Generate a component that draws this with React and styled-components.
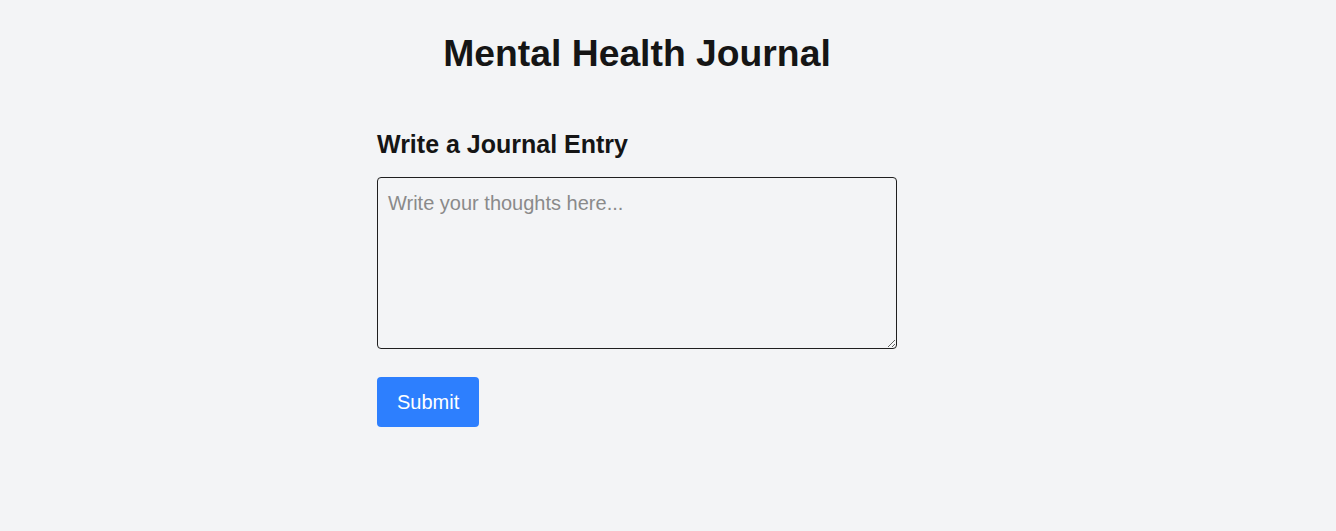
import React, { useState } from 'react';
import styled, { createGlobalStyle } from 'styled-components';

const GlobalStyle = createGlobalStyle`
  html, body {
    margin: 0;
    padding: 0;
    background: #f3f4f6;
    font-family: "Liberation Sans", Arial, sans-serif;
    color: #151515;
  }
`;

const Page = styled.div`
  display: flex;
  justify-content: center;
  min-height: 531px;
  padding: 32px 62px 0 0;
  box-sizing: border-box;
`;

const Column = styled.main`
  display: flex;
  flex-direction: column;
  width: 520px;
`;

const Title = styled.h1`
  margin: 0 0 55px;
  font-size: 37.3px;
  font-weight: 700;
  line-height: 43px;
  text-align: center;
`;

const Form = styled.form`
  display: flex;
  flex-direction: column;
  align-items: flex-start;
`;

const SectionTitle = styled.h2`
  margin: 0 0 18px;
  font-size: 25px;
  font-weight: 700;
  line-height: 29px;
`;

const Entry = styled.textarea`
  box-sizing: border-box;
  width: 520px;
  height: 172px;
  margin: 0 0 28px;
  padding: 14px 10px 10px;
  border: 1px solid #1f1f1f;
  border-radius: 4px;
  background: transparent;
  font-family: inherit;
  font-size: 20px;
  line-height: 23px;
  color: #151515;
  resize: vertical;

  &::placeholder {
    color: #8a8a8a;
  }
`;

const SubmitButton = styled.button`
  height: 50px;
  padding: 0 20px;
  border: 0;
  border-radius: 4px;
  background: #2d7ffe;
  color: #fff;
  font-family: inherit;
  font-size: 20px;
  cursor: pointer;
`;

export default function App() {
  const [text, setText] = useState('');

  return (
    <>
      <GlobalStyle />
      <Page>
        <Column>
          <Title>Mental Health Journal</Title>
          <Form onSubmit={(e) => e.preventDefault()}>
            <SectionTitle>Write a Journal Entry</SectionTitle>
            <Entry
              placeholder="Write your thoughts here..."
              value={text}
              onChange={(e) => setText(e.target.value)}
            />
            <SubmitButton type="submit">Submit</SubmitButton>
          </Form>
        </Column>
      </Page>
    </>
  );
}
